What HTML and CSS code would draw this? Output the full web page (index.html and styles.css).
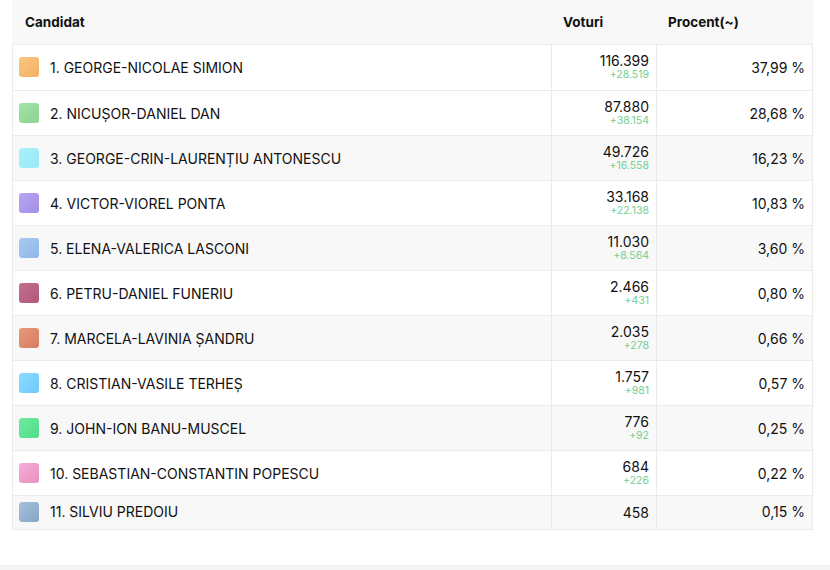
FILE: index.html
```html
<!DOCTYPE html>
<html lang="ro">
<head>
<meta charset="utf-8">
<title>Rezultate</title>
<link rel="stylesheet" href="styles.css">
</head>
<body>
<div class="page">
  <div class="results">
    <div class="row head">
      <div class="cell name">Candidat</div>
      <div class="cell votes">Voturi</div>
      <div class="cell pct">Procent(~)</div>
    </div>
    <div class="row first">
      <div class="cell name"><span class="sw c1"></span>1. GEORGE-NICOLAE SIMION</div>
      <div class="cell votes"><span class="num">116.399</span><span class="delta">+28.519</span></div>
      <div class="cell pct">37,99 %</div>
    </div>
    <div class="row">
      <div class="cell name"><span class="sw c2"></span>2. NICUȘOR-DANIEL DAN</div>
      <div class="cell votes"><span class="num">87.880</span><span class="delta">+38.154</span></div>
      <div class="cell pct">28,68 %</div>
    </div>
    <div class="row alt">
      <div class="cell name"><span class="sw c3"></span>3. GEORGE-CRIN-LAURENȚIU ANTONESCU</div>
      <div class="cell votes"><span class="num">49.726</span><span class="delta">+16.558</span></div>
      <div class="cell pct">16,23 %</div>
    </div>
    <div class="row">
      <div class="cell name"><span class="sw c4"></span>4. VICTOR-VIOREL PONTA</div>
      <div class="cell votes"><span class="num">33.168</span><span class="delta">+22.138</span></div>
      <div class="cell pct">10,83 %</div>
    </div>
    <div class="row alt">
      <div class="cell name"><span class="sw c5"></span>5. ELENA-VALERICA LASCONI</div>
      <div class="cell votes"><span class="num">11.030</span><span class="delta">+8.564</span></div>
      <div class="cell pct">3,60 %</div>
    </div>
    <div class="row">
      <div class="cell name"><span class="sw c6"></span>6. PETRU-DANIEL FUNERIU</div>
      <div class="cell votes"><span class="num">2.466</span><span class="delta">+431</span></div>
      <div class="cell pct">0,80 %</div>
    </div>
    <div class="row alt">
      <div class="cell name"><span class="sw c7"></span>7. MARCELA-LAVINIA ȘANDRU</div>
      <div class="cell votes"><span class="num">2.035</span><span class="delta">+278</span></div>
      <div class="cell pct">0,66 %</div>
    </div>
    <div class="row">
      <div class="cell name"><span class="sw c8"></span>8. CRISTIAN-VASILE TERHEȘ</div>
      <div class="cell votes"><span class="num">1.757</span><span class="delta">+981</span></div>
      <div class="cell pct">0,57 %</div>
    </div>
    <div class="row alt">
      <div class="cell name"><span class="sw c9"></span>9. JOHN-ION BANU-MUSCEL</div>
      <div class="cell votes"><span class="num">776</span><span class="delta">+92</span></div>
      <div class="cell pct">0,25 %</div>
    </div>
    <div class="row">
      <div class="cell name"><span class="sw c10"></span>10. SEBASTIAN-CONSTANTIN POPESCU</div>
      <div class="cell votes"><span class="num">684</span><span class="delta">+226</span></div>
      <div class="cell pct">0,22 %</div>
    </div>
    <div class="row alt short">
      <div class="cell name"><span class="sw c11"></span>11. SILVIU PREDOIU</div>
      <div class="cell votes"><span class="num">458</span></div>
      <div class="cell pct">0,15 %</div>
    </div>
  </div>
</div>
<div class="footer"></div>
</body>
</html>
```

FILE: styles.css
```css
html, body {
  margin: 0;
  padding: 0;
  background: #ffffff;
}
body {
  font-family: Inter, "Noto Sans", sans-serif;
  color: #111111;
  width: 830px;
  height: 570px;
  overflow: hidden;
  display: flex;
  flex-direction: column;
}
.page {
  flex: 1;
  padding: 0 17px 0 12px;
}
.results {
  width: 801px;
}
.row {
  display: grid;
  grid-template-columns: 538px 105px 156px;
  height: 45px;
  box-sizing: border-box;
  border-bottom: 1px solid #ebebeb;
  border-left: 1px solid #ebebeb;
  border-right: 1px solid #ebebeb;
  background: #ffffff;
}
.row.first {
  height: 46px;
  padding-bottom: 1px;
}
.row.alt {
  background: #f8f8f8;
}
.row.short {
  height: 34px;
}
.row.head {
  background: #f8f8f8;
  border-left-color: #f8f8f8;
  border-right-color: #f8f8f8;
  border-bottom-color: #ececec;
}
.cell {
  display: flex;
  align-items: center;
  box-sizing: border-box;
  font-size: 14px;
}
.row .cell + .cell {
  border-left: 1px solid #ebebeb;
}
.row.head .cell + .cell {
  border-left: none;
}
.head .cell {
  font-weight: 700;
  font-size: 13.5px;
  padding-left: 12px;
  padding-bottom: 1px;
}
.name {
  padding-left: 6px;
  gap: 11px;
}
.votes {
  flex-direction: column;
  align-items: flex-end;
  justify-content: center;
  padding-right: 7px;
}
.head .votes, .head .pct {
  align-items: center;
  flex-direction: row;
  justify-content: flex-start;
}
.num {
  font-size: 14px;
  line-height: 16px;
}
.delta {
  font-size: 10.5px;
  line-height: 12px;
  color: #71cf91;
}
.pct {
  justify-content: flex-end;
  padding-right: 7px;
}
.short .pct,
.short .name {
  padding-bottom: 2px;
}
.sw {
  width: 20px;
  height: 20px;
  border-radius: 3px;
  flex: none;
}
.c1 { background: linear-gradient(135deg, #f9c47f, #f5b166); }
.c2 { background: linear-gradient(135deg, #a2e4a7, #8ed393); }
.c3 { background: linear-gradient(135deg, #a9f3fb, #98e8f5); }
.c4 { background: linear-gradient(135deg, #b7a5f1, #a38fe4); }
.c5 { background: linear-gradient(135deg, #a6cbf2, #90b6e9); }
.c6 { background: linear-gradient(135deg, #c46f8f, #b0587b); }
.c7 { background: linear-gradient(135deg, #e8987a, #d67d60); }
.c8 { background: linear-gradient(135deg, #8cdcff, #6ec9fb); }
.c9 { background: linear-gradient(135deg, #6cec9f, #52dc8b); }
.c10 { background: linear-gradient(135deg, #f7addb, #e891bd); }
.c11 { background: linear-gradient(135deg, #a5c1dd, #87a5c6); }
.footer {
  height: 5px;
  flex: none;
  background: #f5f5f5;
  border-top: 1px solid #eeeeee;
  box-sizing: border-box;
}
```
